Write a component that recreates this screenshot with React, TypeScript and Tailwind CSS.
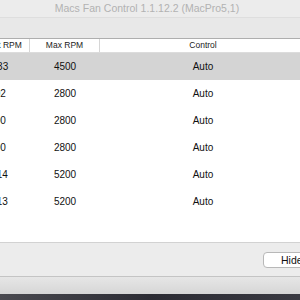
import React from 'react';

interface FanRow {
  current: string;
  max: string;
  control: string;
}

const rows: FanRow[] = [
  { current: '1133', max: '4500', control: 'Auto' },
  { current: '802', max: '2800', control: 'Auto' },
  { current: '800', max: '2800', control: 'Auto' },
  { current: '800', max: '2800', control: 'Auto' },
  { current: '1114', max: '5200', control: 'Auto' },
  { current: '1113', max: '5200', control: 'Auto' },
];

export default function App(): React.JSX.Element {
  return (
    <div className="flex h-[300px] w-[300px] flex-col overflow-hidden bg-[#ececec] font-['Liberation_Sans',Arial,sans-serif]">
      {/* title bar */}
      <div className="flex h-[17px] items-center justify-center bg-[#ececec] pr-[6px] text-[10.5px] text-[#b2b2b2]">
        Macs Fan Control 1.1.12.2 (MacPro5,1)
      </div>
      {/* toolbar */}
      <div className="h-[22px] border-t border-[#dedede] border-b border-b-[#aeaeae] bg-[#e8e8e8]" />

      {/* table */}
      <div className="overflow-hidden bg-white">
        <div className="-ml-[36px] w-[342px]">
          <div className="grid h-[14px] grid-cols-[66px_70px_206px] border-b border-[#dcdcdc] text-[8.5px] leading-[13px] text-[#1a1a1a]">
            <div className="border-r border-[#d6d6d6] pl-[1px] text-center">Current RPM</div>
            <div className="border-r border-[#d6d6d6] text-center">Max RPM</div>
            <div className="text-center">Control</div>
          </div>
          {rows.map((row, i) => (
            <div
              key={i}
              className={`grid h-[27px] grid-cols-[66px_70px_206px] items-center text-[10px] text-[#111] ${
                i === 0 ? 'bg-[#d4d4d4]' : 'bg-white'
              }`}
            >
              <div className="pl-[1px] text-center">{row.current}</div>
              <div className="text-center">{row.max}</div>
              <div className="text-center">{row.control}</div>
            </div>
          ))}
          <div className="h-[27px]" />
        </div>
      </div>

      {/* bottom bar */}
      <div className="flex h-[34px] items-start border-t border-[#d2d2d2] bg-[#ececec] pl-[263px] pt-[9px]">
        <button
          type="button"
          className="h-[16px] w-[70px] shrink-0 rounded-[4px] border border-[#b8b8b8] bg-white pl-[17px] text-left text-[10.5px] leading-[14px] text-[#111]"
        >
          Hide
        </button>
      </div>
      <div className="h-[18px] border-t border-[#c4c4c4] bg-gradient-to-b from-[#e6e6e6] to-[#d6d6d6]" />
      <div className="flex-1 bg-gradient-to-r from-[#4a4a50] via-[#2c2c34] to-[#3a3a42]" />
    </div>
  );
}
